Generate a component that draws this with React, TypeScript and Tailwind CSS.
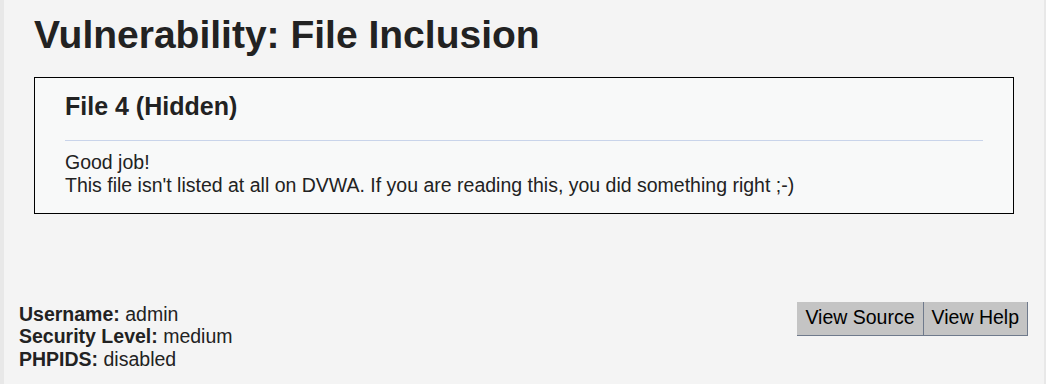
export default function App() {
  return (
    <div className="flex h-[384px] w-full bg-[#f4f4f4] text-[#222] font-['Liberation_Sans',Arial,sans-serif]">
      <div className="w-[4px] shrink-0 bg-[#e8e8e8]" />
      <div className="flex flex-1 flex-col">
        {/* Page body */}
        <div className="pl-[30px] pr-[30px] pt-[13px]">
          <h1 className="text-[39px] font-bold leading-[44px] text-[#222]">
            Vulnerability: File Inclusion
          </h1>
          <div className="mt-[20px] border border-black bg-[#f8f9f9] px-[30px] pt-[14px] pb-[16px]">
            <h3 className="text-[25px] font-bold leading-[28px] text-[#222]">File 4 (Hidden)</h3>
            <hr className="mt-[20px] mb-[10px] border-t border-[#c9d4ea]" />
            <p className="text-[19.5px] leading-[23px] text-[#222]">
              Good job!
              <br />
              This file isn't listed at all on DVWA. If you are reading this, you did something right ;-)
            </p>
          </div>
        </div>

        {/* Footer info */}
        <div className="mt-auto flex items-start justify-between pl-[15px] pr-[16px] pb-[14px]">
          <div className="text-[19.5px] leading-[22.5px] text-[#222]">
            <div>
              <span className="font-bold">Username:</span> admin
            </div>
            <div>
              <span className="font-bold">Security Level:</span> medium
            </div>
            <div>
              <span className="font-bold">PHPIDS:</span> disabled
            </div>
          </div>
          <div className="mt-[-1px] flex">
            <button className="h-[34px] border-r border-b border-[#6f7a8c] bg-[#c4c4c4] px-[8px] text-[19.5px] text-black">
              View Source
            </button>
            <button className="h-[34px] border-r border-b border-[#6f7a8c] bg-[#c4c4c4] px-[8px] text-[19.5px] text-black">
              View Help
            </button>
          </div>
        </div>
      </div>
      <div className="w-[2px] shrink-0 bg-[#e8e8e8]" />
    </div>
  );
}
